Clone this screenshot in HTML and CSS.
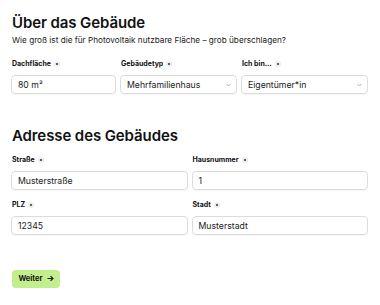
FILE: index.html
```html
<!DOCTYPE html>
<html lang="de">
<head>
<meta charset="utf-8">
<link rel="stylesheet" href="styles.css">
</head>
<body>
<main class="page">
  <section class="section">
    <h1 class="title">Über das Gebäude</h1>
    <p class="lead">Wie groß ist die für Photovoltaik nutzbare Fläche – grob überschlagen?</p>
    <div class="grid grid-3">
      <div class="field">
        <div class="label">Dachfläche <span class="req"></span></div>
        <div class="input">80 m²</div>
      </div>
      <div class="field">
        <div class="label">Gebäudetyp <span class="req"></span></div>
        <div class="input select">Mehrfamilienhaus
          <svg class="chev" width="5" height="4" viewBox="0 0 5 4"><polyline points="0.5,1 2.5,3 4.5,1" fill="none" stroke="#a0a0a0" stroke-width="0.8"/></svg>
        </div>
      </div>
      <div class="field">
        <div class="label">Ich bin… <span class="req"></span></div>
        <div class="input select">Eigentümer*in
          <svg class="chev" width="5" height="4" viewBox="0 0 5 4"><polyline points="0.5,1 2.5,3 4.5,1" fill="none" stroke="#a0a0a0" stroke-width="0.8"/></svg>
        </div>
      </div>
    </div>
  </section>
  <section class="section section-2">
    <h2 class="title">Adresse des Gebäudes</h2>
    <div class="grid grid-2">
      <div class="field">
        <div class="label">Straße <span class="req"></span></div>
        <div class="input">Musterstraße</div>
      </div>
      <div class="field">
        <div class="label">Hausnummer <span class="req"></span></div>
        <div class="input">1</div>
      </div>
      <div class="field">
        <div class="label">PLZ <span class="req"></span></div>
        <div class="input">12345</div>
      </div>
      <div class="field">
        <div class="label">Stadt <span class="req"></span></div>
        <div class="input">Musterstadt</div>
      </div>
    </div>
  </section>
  <div class="actions">
    <button class="btn">Weiter <svg class="arrow" width="7" height="7" viewBox="0 0 7 7"><path d="M0.5 3.5H6M3.6 1.1L6 3.5L3.6 5.9" fill="none" stroke="#1a1a1a" stroke-width="1.1"/></svg></button>
  </div>
</main>
</body>
</html>
```
FILE: styles.css
```css
* { box-sizing: border-box; }
html, body { margin: 0; padding: 0; background: #fff; }
body {
  font-family: Inter, "Noto Sans", sans-serif;
  color: #161616;
}
.page {
  width: 380px;
  padding: 13px 12px 0 11px;
}
.title {
  margin: 0 0 0 1px;
  font-size: 15px;
  line-height: 20px;
  font-weight: 600;
  letter-spacing: -0.1px;
  color: #111;
}
.lead {
  margin: 1px 0 0 1px;
  font-size: 8.2px;
  line-height: 12px;
  color: #222;
}
.grid {
  display: grid;
  column-gap: 4px;
}
.grid-3 {
  grid-template-columns: 105px 117px 1fr;
  margin-top: 13px;
}
.grid-2 {
  grid-template-columns: 1fr 1fr;
  margin-top: 9px;
  row-gap: 10px;
}
.section-2 { margin-top: 32px; }
.field {
  display: flex;
  flex-direction: column;
  gap: 6px;
}
.label {
  display: flex;
  align-items: center;
  gap: 3px;
  margin-left: 1px;
  font-size: 7px;
  line-height: 10px;
  font-weight: 700;
  color: #111;
}
.req {
  width: 6px;
  height: 6px;
  border-radius: 50%;
  background: #ececec;
  display: inline-flex;
  align-items: center;
  justify-content: center;
}
.req::after {
  content: "";
  width: 2px;
  height: 2px;
  border-radius: 50%;
  background: #333;
}
.input {
  height: 19px;
  border: 1px solid #dcdcdc;
  border-radius: 4px;
  box-shadow: 0 1px 1px rgba(0,0,0,0.04);
  padding: 0 5px 0 6px;
  display: flex;
  align-items: center;
  font-size: 8.7px;
  color: #1b1b1b;
}
.select { justify-content: space-between; }
.chev { display: block; }
.actions { margin-top: 30px; margin-left: 1px; }
.btn {
  width: 48px;
  height: 18px;
  border: 0;
  border-radius: 4px;
  background: #c3ee8e;
  font-family: Inter, "Noto Sans", sans-serif;
  font-size: 7.5px;
  font-weight: 700;
  color: #141414;
  display: inline-flex;
  align-items: center;
  justify-content: center;
  gap: 4px;
  padding: 0;
}
.arrow { display: block; }
```
